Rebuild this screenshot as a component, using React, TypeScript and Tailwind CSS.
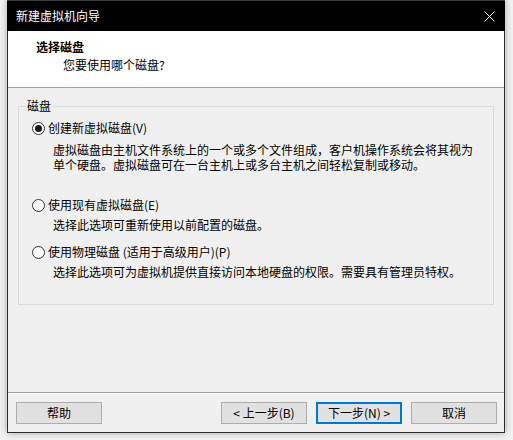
import React from "react";

const font = { fontFamily: '"Noto Sans CJK SC", "Microsoft YaHei", sans-serif' };

function Radio({ checked }: { checked?: boolean }) {
  return (
    <span className="w-[13px] h-[13px] rounded-full border border-[#333333] bg-white flex items-center justify-center shrink-0">
      {checked ? <span className="w-[7px] h-[7px] rounded-full bg-[#1a1a1a]" /> : null}
    </span>
  );
}

function Btn({ children, primary }: { children: React.ReactNode; primary?: boolean }) {
  return (
    <div
      className={
        "w-[86px] h-[22px] flex items-center justify-center bg-[#e1e1e1] text-[12px] leading-[16px] text-black " +
        (primary ? "border-2 border-[#0078d7]" : "border border-[#adadad]")
      }
    >
      {children}
    </div>
  );
}

export default function App() {
  return (
    <div className="w-[513px] h-[440px] bg-[#f3f3f3] pl-[7px]" style={font}>
      <div className="w-[498px] h-[433px] flex flex-col shadow-[0_0_8px_rgba(0,0,0,0.3)]">
        <div className="h-[31px] bg-black border-t border-[#3a3a3a] pl-[9px] pr-[10px] flex items-center justify-between">
          <span className="text-white text-[12px] leading-[16px]">新建虚拟机向导</span>
          <svg width="11" height="11" viewBox="0 0 11 11">
            <path d="M0.5 0.5 L10.5 10.5 M10.5 0.5 L0.5 10.5" stroke="#ffffff" strokeWidth="1" fill="none" />
          </svg>
        </div>
        <div className="flex-1 flex flex-col border-x border-b border-[#2b2b2b] bg-[#f0f0f0]">
          <div className="h-[57px] bg-white border-b border-[#a0a0a0] pt-[8px] text-black">
            <div className="pl-[28px] text-[12px] leading-[16px] font-bold">选择磁盘</div>
            <div className="pl-[55px] mt-[2px] text-[12px] leading-[16px]">您要使用哪个磁盘?</div>
          </div>
          <div className="flex-1 flex flex-col">
            <div className="relative mx-[10px] mt-[18px] border border-[#dcdcdc] pt-[13px] pl-[13px] pb-[25px] text-[12px] text-black">
              <span className="absolute -top-[9px] left-[7px] px-[1px] bg-[#f0f0f0] leading-[16px]">磁盘</span>
              <div className="h-[16px] flex items-center gap-[3px]">
                <Radio checked />
                <span className="leading-[16px]">创建新虚拟磁盘(V)</span>
              </div>
              <div className="mt-[6px] pl-[21px] leading-[15px]">
                <div>虚拟磁盘由主机文件系统上的一个或多个文件组成，客户机操作系统会将其视为</div>
                <div>单个硬盘。虚拟磁盘可在一台主机上或多台主机之间轻松复制或移动。</div>
              </div>
              <div className="mt-[25px] h-[16px] flex items-center gap-[3px]">
                <Radio />
                <span className="leading-[16px]">使用现有虚拟磁盘(E)</span>
              </div>
              <div className="mt-[5px] pl-[21px] leading-[14px]">选择此选项可重新使用以前配置的磁盘。</div>
              <div className="mt-[12px] h-[16px] flex items-center gap-[3px]">
                <Radio />
                <span className="leading-[16px]">使用物理磁盘 (适用于高级用户)(P)</span>
              </div>
              <div className="mt-[5px] pl-[21px] leading-[14px]">
                选择此选项可为虚拟机提供直接访问本地硬盘的权限。需要具有管理员特权。
              </div>
            </div>
          </div>
          <div className="h-[1px] bg-[#a0a0a0]" />
          <div className="h-[1px] bg-white" />
          <div className="pt-[8px] pb-[8px] pl-[8px] pr-[7px] flex items-center">
            <Btn>帮助</Btn>
            <div className="flex-1" />
            <div className="flex gap-[9px]">
              <Btn>&lt; 上一步(B)</Btn>
              <Btn primary>下一步(N) &gt;</Btn>
              <Btn>取消</Btn>
            </div>
          </div>
        </div>
      </div>
    </div>
  );
}
